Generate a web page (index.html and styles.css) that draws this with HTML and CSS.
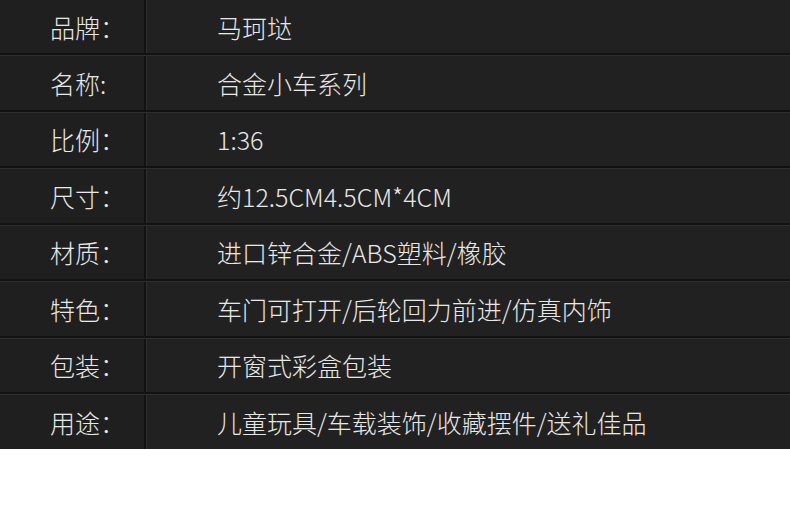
FILE: index.html
```html
<!DOCTYPE html>
<html lang="zh-CN">
<head>
    <meta charset="UTF-8">
    <meta name="viewport" content="width=device-width, initial-scale=1.0">
    <title>产品参数</title>
    <link rel="stylesheet" href="styles.css">
</head>
<body>
    <!-- 参数表 -->
    <div class="spec-table">
        <div class="spec-row first">
            <div class="spec-label">品牌：</div>
            <div class="spec-value">马珂垯</div>
        </div>
        <div class="spec-row">
            <div class="spec-label">名称:</div>
            <div class="spec-value">合金小车系列</div>
        </div>
        <div class="spec-row">
            <div class="spec-label">比例：</div>
            <div class="spec-value">1:36</div>
        </div>
        <div class="spec-row">
            <div class="spec-label">尺寸：</div>
            <div class="spec-value">约12.5CM4.5CM*4CM</div>
        </div>
        <div class="spec-row">
            <div class="spec-label">材质：</div>
            <div class="spec-value">进口锌合金/ABS塑料/橡胶</div>
        </div>
        <div class="spec-row">
            <div class="spec-label">特色：</div>
            <div class="spec-value">车门可打开/后轮回力前进/仿真内饰</div>
        </div>
        <div class="spec-row">
            <div class="spec-label">包装：</div>
            <div class="spec-value">开窗式彩盒包装</div>
        </div>
        <div class="spec-row last">
            <div class="spec-label">用途：</div>
            <div class="spec-value">儿童玩具/车载装饰/收藏摆件/送礼佳品</div>
        </div>
    </div>
</body>
</html>
```

FILE: styles.css
```css
body {
    margin: 0;
    padding: 0;
    background-color: #fff;
    font-family: "Noto Sans CJK SC", "Noto Sans", sans-serif;
}
.spec-table {
    width: 790px;
    background-color: #1f1f1f;
    color: #e8e8e8;
    font-size: 25px;
    font-weight: 300;
}
.spec-row {
    display: grid;
    grid-template-columns: 146px 1fr;
    height: 56.5px;
    box-sizing: border-box;
    border-top: 1px solid #2e2e2e;
    border-bottom: 2px solid #121212;
}
.spec-row.first {
    height: 55px;
    border-top: none;
}
.spec-row.last {
    height: 55px;
    border-bottom: none;
}
.spec-label {
    display: flex;
    align-items: center;
    padding-left: 50px;
    border-right: 2px solid #121212;
    white-space: nowrap;
}
.spec-value {
    display: flex;
    align-items: center;
    padding-left: 70px;
    border-left: 1px solid #2e2e2e;
    background-color: #212121;
    white-space: nowrap;
}
```
